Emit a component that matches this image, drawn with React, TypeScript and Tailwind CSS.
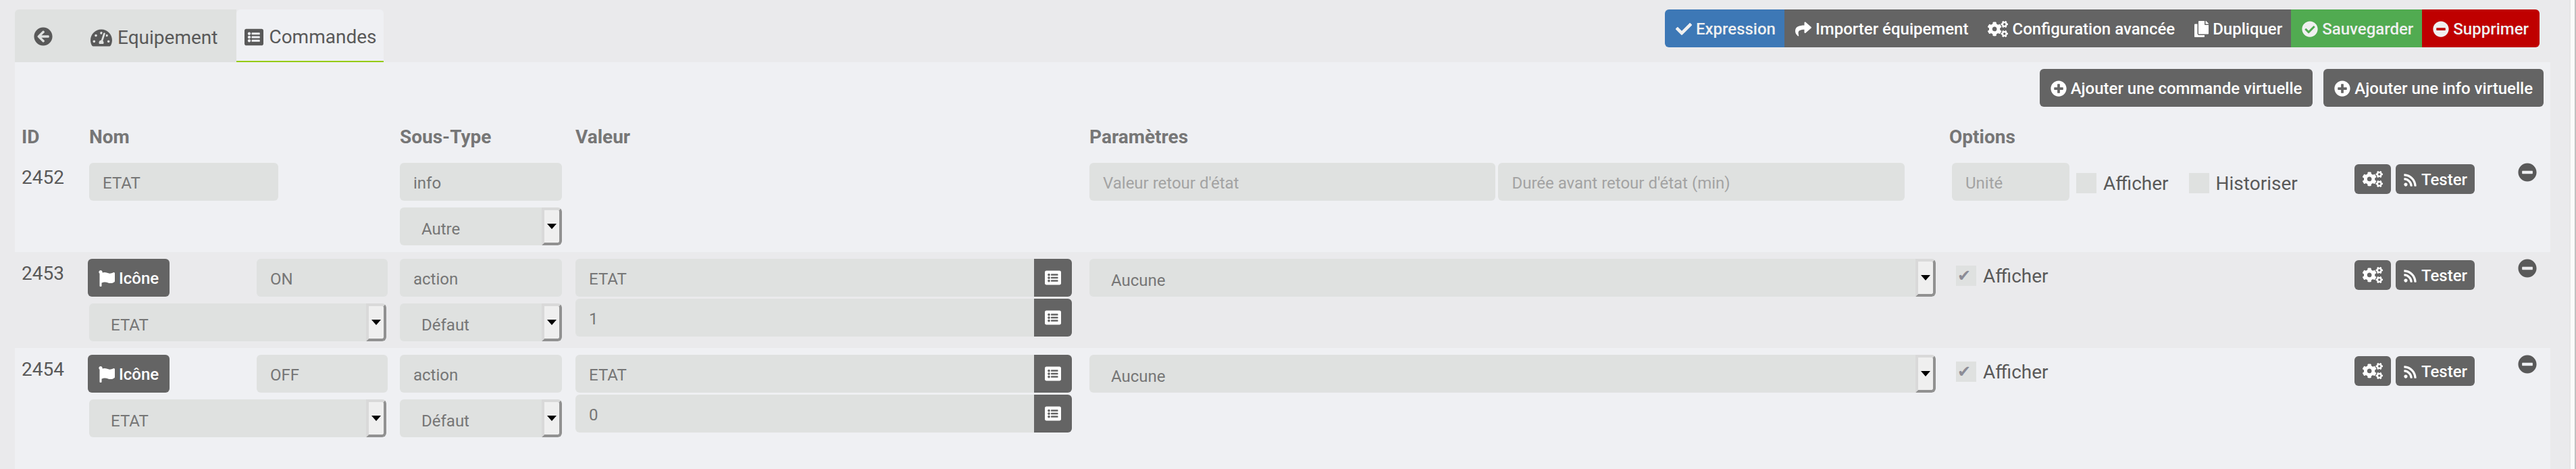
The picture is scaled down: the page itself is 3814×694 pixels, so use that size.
import type { ReactNode } from "react";
import {
  FaArrowCircleLeft,
  FaCheck,
  FaCheckCircle,
  FaCogs,
  FaCopy,
  FaFlag,
  FaListAlt,
  FaMinusCircle,
  FaPlusCircle,
  FaRss,
  FaShare,
  FaTachometerAlt,
} from "react-icons/fa";

const fieldClass =
  "h-14 rounded-md bg-[#dfe1e0] px-5 pt-1 text-2xl text-[#767676] placeholder:text-[#a3a3a3] outline-none";

const actions = [
  { label: "Expression", icon: <FaCheck />, className: "bg-[#3d78b6] text-[#f0f0f0]" },
  { label: "Importer équipement", icon: <FaShare />, className: "bg-[#646464] text-white" },
  { label: "Configuration avancée", icon: <FaCogs className="text-[30px]" />, className: "bg-[#646464] text-white" },
  { label: "Dupliquer", icon: <FaCopy className="w-[21px]" />, className: "bg-[#646464] text-white" },
  { label: "Sauvegarder", icon: <FaCheckCircle />, className: "bg-[#51ab51] text-[#f0f0f0]" },
  { label: "Supprimer", icon: <FaMinusCircle />, className: "bg-[#bf0000] text-[#f0f0f0]" },
];

const commands = [
  { id: "2452", name: "ETAT", type: "info", subType: "Autre" },
  { id: "2453", name: "ON", type: "action", subType: "Défaut", target: "ETAT", value: "1" },
  { id: "2454", name: "OFF", type: "action", subType: "Défaut", target: "ETAT", value: "0" },
];

type Command = (typeof commands)[number];

function Select({ value, label, className = "" }: { value: string; label: string; className?: string }) {
  return (
    <div className={`relative h-14 overflow-hidden rounded-md bg-[#dfe1e0] ${className}`}>
      <select
        aria-label={label}
        defaultValue={value}
        className="h-full w-full appearance-none pt-2 pl-8 text-2xl text-[#767676] outline-none"
      >
        <option>{value}</option>
      </select>
      <span className="pointer-events-none absolute inset-y-0 right-0 flex w-[30px] items-center justify-center rounded-r-md border-4 border-t-[#d9d9d9] border-r-[#919191] border-b-[#919191] border-l-[#d9d9d9] bg-[#efefef]">
        <svg viewBox="0 0 14 8" className="h-2 w-3.5" aria-hidden="true">
          <path d="M0 0h14L7 8Z" />
        </svg>
      </span>
    </div>
  );
}

function Checkbox({ label, checked = false }: { label: string; checked?: boolean }) {
  return (
    <label className="flex items-center gap-2.5 text-[28px] leading-10">
      <span className="relative flex size-[30px]">
        <input type="checkbox" defaultChecked={checked} className="peer size-[30px] appearance-none bg-[#dfe1e0]" />
        <span className="pointer-events-none absolute inset-0 hidden pl-0.5 font-['DejaVu_Sans',sans-serif] text-2xl leading-[30px] text-[#8c8c96] peer-checked:block">
          ✔
        </span>
      </span>
      <span className="pt-0.5">{label}</span>
    </label>
  );
}

function ValueField({ value, label }: { value: string; label: string }) {
  return (
    <div className="flex">
      <input aria-label={label} defaultValue={value} className={`${fieldClass} min-w-0 flex-1 rounded-r-none`} />
      <button
        aria-label="Choisir une commande"
        className="flex h-14 w-14 items-center justify-center rounded-r-md bg-[#646464] text-2xl text-white"
      >
        <FaListAlt />
      </button>
    </div>
  );
}

function DarkButton({ children }: { children: ReactNode }) {
  return (
    <button className="flex h-14 items-center gap-1.5 rounded-md bg-[#646464] px-4 pt-0.5 text-2xl font-medium text-white">
      {children}
    </button>
  );
}

function CommandRow({ command }: { command: Command }) {
  const isAction = command.type === "action";

  return (
    <tr className="h-[142px] align-top even:bg-[#eaeaec]">
      <td className="px-2.5 pt-3 text-[28px] leading-10">{command.id}</td>
      <td className="px-2.5 pt-2.5">
        {isAction ? (
          <>
            <div className="-mx-0.5 flex justify-between">
              <DarkButton>
                <FaFlag />
                Icône
              </DarkButton>
              <input aria-label="Nom" defaultValue={command.name} className={`${fieldClass} w-[194px]`} />
            </div>
            <Select label="Commande liée" value="ETAT" className="mt-2.5" />
          </>
        ) : (
          <input aria-label="Nom" defaultValue={command.name} className={`${fieldClass} w-[280px]`} />
        )}
      </td>
      <td className="px-2.5 pt-2.5">
        <input aria-label="Type" defaultValue={command.type} className={`${fieldClass} w-full`} />
        <Select label="Sous-type" value={command.subType} className="mt-2.5" />
      </td>
      <td className="pt-2.5 pr-4 pl-2.5">
        {isAction && (
          <div className="flex flex-col gap-[3px]">
            <ValueField label="Commande cible" value={command.target ?? ""} />
            <ValueField label="Valeur" value={command.value ?? ""} />
          </div>
        )}
      </td>
      <td className="px-2.5 pt-2.5">
        {isAction ? (
          <Select label="Paramètre" value="Aucune" />
        ) : (
          <div className="flex gap-1">
            <input
              aria-label="Valeur retour d'état"
              placeholder="Valeur retour d'état"
              className={`${fieldClass} w-[48%]`}
            />
            <input
              aria-label="Durée avant retour d'état (min)"
              placeholder="Durée avant retour d'état (min)"
              className={`${fieldClass} w-[48%]`}
            />
          </div>
        )}
      </td>
      <td className="px-2.5 pt-2.5">
        {isAction ? (
          <div className="pt-1 pl-2.5">
            <Checkbox label="Afficher" checked />
          </div>
        ) : (
          <div className="flex items-center pl-1">
            <input aria-label="Unité" placeholder="Unité" className={`${fieldClass} mr-2.5 w-[174px]`} />
            <div className="flex gap-[30px] pt-1">
              <Checkbox label="Afficher" />
              <Checkbox label="Historiser" />
            </div>
          </div>
        )}
      </td>
      <td className="px-2.5 pt-2.5">
        <div className="flex items-start">
          <button
            aria-label="Configuration"
            className="mt-0.5 flex h-11 w-[54px] items-center justify-center rounded-md bg-[#646464] text-[30px] text-white"
          >
            <FaCogs />
          </button>
          <button className="mt-0.5 ml-[7px] flex h-11 items-center gap-1.5 rounded-md bg-[#646464] px-[11px] pt-0.5 text-2xl font-medium text-white">
            <FaRss className="text-[21px]" />
            Tester
          </button>
          <button aria-label="Supprimer la commande" className="mr-2.5 ml-auto text-[28px]">
            <FaMinusCircle />
          </button>
        </div>
      </td>
    </tr>
  );
}

export default function App() {
  return (
    <div className="flex min-h-screen bg-[#eaeaec] font-[Roboto,sans-serif] text-[#595959]">
      <main className="flex min-w-0 flex-1 flex-col pt-3.5 pr-7 pl-[22px]">
        <header className="flex h-[78px] items-start justify-between">
          <nav className="flex text-[28px]">
            <a
              href="#retour"
              aria-label="Retour"
              className="flex h-20 w-[84px] items-center justify-center rounded-tl-md bg-[#dfe1e0]"
            >
              <FaArrowCircleLeft />
            </a>
            <a href="#equipement" className="flex h-20 items-center gap-2 bg-[#dfe1e0] px-7 pt-1">
              <FaTachometerAlt className="text-[32px]" />
              Equipement
            </a>
            <a
              href="#commandes"
              className="flex h-[78px] items-center gap-2 rounded-t-md border-b-2 border-[#94ca02] bg-[#eff0f3] pt-1.5 pr-2.5 pl-3"
            >
              <FaListAlt />
              Commandes
            </a>
          </nav>
          <div className="mr-4 flex overflow-hidden rounded-md">
            {actions.map((action) => (
              <button
                key={action.label}
                className={`flex h-14 items-center gap-1.5 pt-0.5 pr-[13px] pl-4 text-2xl font-medium last:pr-4 ${action.className}`}
              >
                {action.icon}
                {action.label}
              </button>
            ))}
          </div>
        </header>

        <section className="flex-1 bg-[#eff0f3]">
          <div className="flex justify-end gap-4 pt-2.5 pr-2.5 pb-[13px]">
            <DarkButton>
              <FaPlusCircle />
              Ajouter une commande virtuelle
            </DarkButton>
            <DarkButton>
              <FaPlusCircle />
              Ajouter une info virtuelle
            </DarkButton>
          </div>

          <table className="w-full table-fixed">
            <thead>
              <tr className="h-[60px] text-left text-[28px] leading-10 text-[#767676]">
                <th className="w-[100px] px-2.5 pt-1">ID</th>
                <th className="w-[460px] px-2.5 pt-1">Nom</th>
                <th className="w-[260px] px-2.5 pt-1">Sous-Type</th>
                <th className="w-[761px] px-2.5 pt-1">Valeur</th>
                <th className="px-2.5 pt-1">Paramètres</th>
                <th className="w-[600px] px-2.5 pt-1">Options</th>
                <th className="w-[300px]" aria-label="Actions" />
              </tr>
            </thead>
            <tbody>
              {commands.map((command) => (
                <CommandRow key={command.id} command={command} />
              ))}
            </tbody>
          </table>
        </section>
      </main>
      <div className="w-2.5 border-r-2 border-l-2 border-r-[#c1c1c1] border-l-[#e6e6e6] bg-[#fafafa]" />
    </div>
  );
}
